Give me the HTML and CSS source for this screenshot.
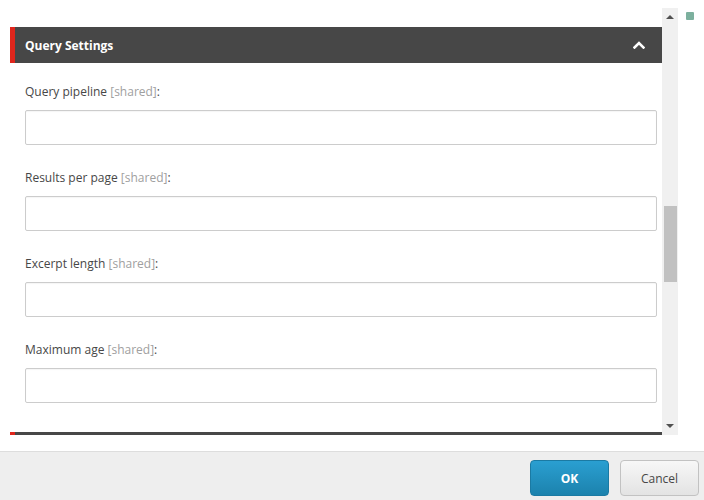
FILE: index.html
```html
<!DOCTYPE html>
<html>
<head>
<meta charset="utf-8">
<link rel="stylesheet" href="styles.css">
</head>
<body>
<div class="page">
  <div class="top">
    <div class="scroller">
      <div class="content">
        <div class="section-head">
          <span class="section-title">Query Settings</span>
          <svg class="chev" width="12" height="8" viewBox="0 0 12 8"><path d="M1.5 6.5 L6 2 L10.5 6.5" fill="none" stroke="#fff" stroke-width="2.6" stroke-linecap="square"/></svg>
        </div>
        <div class="fields">
          <div class="field">
            <label class="label">Query pipeline <span class="shared">[shared]</span>:</label>
            <div class="input"></div>
          </div>
          <div class="field">
            <label class="label">Results per page <span class="shared">[shared]</span>:</label>
            <div class="input"></div>
          </div>
          <div class="field">
            <label class="label">Excerpt length <span class="shared">[shared]</span>:</label>
            <div class="input"></div>
          </div>
          <div class="field">
            <label class="label">Maximum age <span class="shared">[shared]</span>:</label>
            <div class="input"></div>
          </div>
        </div>
        <div class="section-next"></div>
      </div>
      <div class="scrollbar">
        <div class="arrow-up"></div>
        <div class="track"><div class="thumb"></div></div>
        <div class="arrow-down"></div>
      </div>
    </div>
    <div class="side"><span class="dot"></span></div>
  </div>
  <div class="footer">
    <button class="btn btn-ok">OK</button>
    <button class="btn btn-cancel">Cancel</button>
  </div>
</div>
</body>
</html>
```
FILE: styles.css
```css
* { box-sizing: border-box; }
html, body { margin: 0; padding: 0; }
body {
  width: 704px;
  height: 500px;
  overflow: hidden;
  background: #fff;
  font-family: "Open Sans", "Liberation Sans", sans-serif;
  font-size: 12px;
  color: #474747;
}
.page { display: flex; flex-direction: column; height: 500px; }
.top {
  display: flex;
  height: 451px;
  padding: 8px 0 0 10px;
}
.scroller {
  display: flex;
  width: 668px;
  height: 427px;
}
.content {
  width: 652px;
  height: 427px;
  overflow: hidden;
  padding-top: 19px;
}
.section-head {
  height: 36px;
  background: #474747;
  border-left: 5px solid #e0261c;
  display: flex;
  align-items: center;
  justify-content: space-between;
  padding: 0 17px 0 10px;
}
.section-title {
  color: #fff;
  font-weight: 700;
  font-size: 12px;
}
.chev { display: block; margin-top: -1px; }
.fields { padding: 20px 5px 0 15px; }
.field { margin-bottom: 24px; }
.field:last-child { margin-bottom: 29px; }
.label {
  display: block;
  height: 18px;
  line-height: 18px;
  margin-bottom: 9px;
  color: #474747;
}
.shared { color: #a0a0a0; }
.input {
  height: 35px;
  border: 1px solid #cccccc;
  border-radius: 2px;
  background: #fff;
  box-shadow: inset 0 1px 1px rgba(0,0,0,0.04);
}
.section-next {
  height: 3px;
  background: #474747;
  border-left: 5px solid #e0261c;
}
.scrollbar {
  width: 16px;
  height: 427px;
  background: #f0f0f0;
  display: flex;
  flex-direction: column;
  align-items: center;
}
.arrow-up, .arrow-down {
  height: 17px;
  width: 16px;
  position: relative;
}
.arrow-up::after {
  content: "";
  position: absolute;
  left: 4px;
  top: 7px;
  border-left: 4px solid transparent;
  border-right: 4px solid transparent;
  border-bottom: 4px solid #505050;
}
.arrow-down::after {
  content: "";
  position: absolute;
  left: 4px;
  top: 6px;
  border-left: 4px solid transparent;
  border-right: 4px solid transparent;
  border-top: 4px solid #505050;
}
.track { flex: 1; width: 16px; padding: 181px 1px 0 2px; }
.thumb { height: 76px; background: #c1c1c1; }
.side { padding: 4px 0 0 8px; }
.dot {
  display: block;
  width: 8px;
  height: 8px;
  background: #7cb09e;
  border-radius: 1px;
}
.footer {
  height: 49px;
  background: #eeeeee;
  border-top: 1px solid #dddddd;
  display: flex;
  justify-content: flex-end;
  align-items: flex-start;
  padding: 8px 5px 0 0;
  gap: 11px;
}
.btn {
  width: 79px;
  height: 36px;
  border-radius: 4px;
  font-family: "Open Sans", "Liberation Sans", sans-serif;
  font-size: 12px;
  padding: 0;
  cursor: pointer;
}
.btn-ok {
  background: linear-gradient(#2a9fd1, #1c82ad);
  border: 1px solid #1b7aa3;
  color: #fff;
  font-weight: 700;
}
.btn-cancel {
  background: linear-gradient(#f7f7f7, #e3e3e3);
  border: 1px solid #c2c2c2;
  color: #474747;
}
```
